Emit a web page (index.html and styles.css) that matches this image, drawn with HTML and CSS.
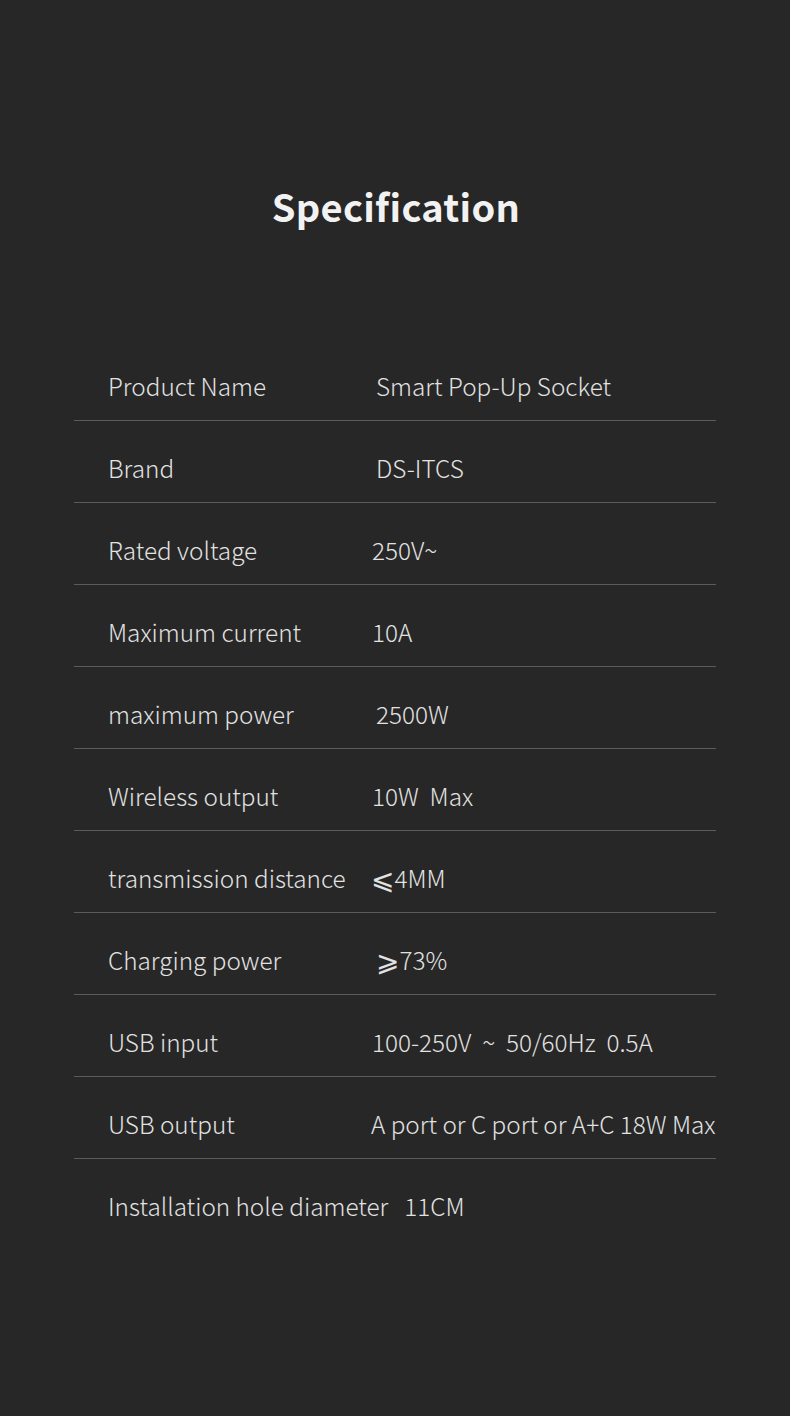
FILE: index.html
```html
<!DOCTYPE html>
<html lang="en">
<head>
<meta charset="utf-8">
<title>Specification</title>
<link rel="stylesheet" href="styles.css">
</head>
<body>
<main class="page">
  <h1 class="title">Specification</h1>
  <div class="spec">
    <div class="row"><span class="label">Product Name</span><span class="value v-in">Smart Pop-Up Socket</span></div>
    <div class="row"><span class="label">Brand</span><span class="value v-in">DS-ITCS</span></div>
    <div class="row"><span class="label">Rated voltage</span><span class="value">250V~</span></div>
    <div class="row"><span class="label">Maximum current</span><span class="value">10A</span></div>
    <div class="row"><span class="label">maximum power</span><span class="value v-in">2500W</span></div>
    <div class="row"><span class="label">Wireless output</span><span class="value">10W&nbsp; Max</span></div>
    <div class="row"><span class="label">transmission distance</span><span class="value v-out"><span class="sym">⩽</span>4MM</span></div>
    <div class="row"><span class="label">Charging power</span><span class="value v-in"><span class="sym">⩾</span>73%</span></div>
    <div class="row"><span class="label">USB input</span><span class="value">100-250V&nbsp; ~&nbsp; 50/60Hz&nbsp; 0.5A</span></div>
    <div class="row"><span class="label">USB output</span><span class="value v-out">A port or C port or A+C 18W Max</span></div>
    <div class="row row-last"><span class="label">Installation hole diameter&nbsp;&nbsp; 11CM</span></div>
  </div>
</main>
</body>
</html>
```
FILE: styles.css
```css
html, body {
  margin: 0;
  padding: 0;
  background: #272727;
}
.page {
  width: 790px;
  min-height: 1416px;
  box-sizing: border-box;
  padding-top: 181px;
  font-family: "Noto Sans CJK SC", "Noto Sans", sans-serif;
  color: #e2e2e2;
}
.title {
  margin: 0 0 108px;
  height: 50px;
  line-height: 50px;
  text-align: center;
  font-size: 38px;
  font-weight: 700;
  color: #f2f2f2;
  letter-spacing: 0.3px;
  padding-left: 2px;
}
.spec {
  width: 642px;
  margin-left: 74px;
}
.row {
  display: flex;
  height: 34px;
  padding: 30px 0 17px 34px;
  line-height: 34px;
  font-size: 24.3px;
  font-weight: 300;
  border-bottom: 1px solid #5b5b5b;
  white-space: nowrap;
}
.row-last {
  border-bottom: none;
}
.label {
  width: 264px;
  flex: none;
}
.value {
  flex: none;
  height: 34px;
}
.v-in {
  padding-left: 4px;
}
.v-out {
  margin-left: -1px;
}
.sym {
  font-family: "DejaVu Sans", sans-serif;
  font-weight: 400;
  font-size: 28px;
  line-height: 20px;
  vertical-align: -1px;
}
```
